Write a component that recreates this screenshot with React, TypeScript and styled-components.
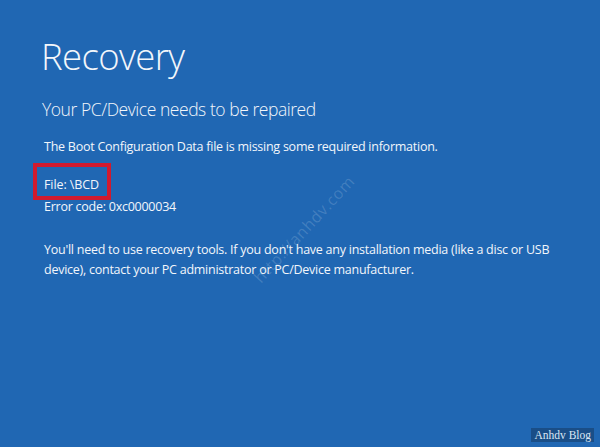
import styled, { createGlobalStyle } from "styled-components";

const GlobalStyle = createGlobalStyle`
  html, body {
    margin: 0;
    padding: 0;
    background: #2067b3;
  }
  #root {
    height: 447px;
  }
`;

const Screen = styled.main`
  position: relative;
  box-sizing: border-box;
  width: 600px;
  height: 447px;
  overflow: hidden;
  padding: 30px 0 0 41px;
  background: #2067b3;
  color: #f2f6fb;
  font-family: "Open Sans", "Noto Sans", sans-serif;
`;

const Title = styled.h1`
  margin: 0;
  font-size: 36.5px;
  font-weight: 300;
  line-height: 52px;
  letter-spacing: -0.6px;
`;

const Subtitle = styled.h2`
  margin: 14px 0 0 1px;
  font-size: 17.5px;
  font-weight: 300;
  line-height: 26px;
  letter-spacing: -0.45px;
`;

const Text = styled.p<{ $gap?: number }>`
  margin: ${(p) => p.$gap ?? 0}px 0 0 3px;
  font-size: 12.5px;
  font-weight: 400;
  line-height: 20px;
  letter-spacing: -0.25px;
`;

const Details = styled.div`
  margin-top: 6px;
  display: flex;
  flex-direction: column;
  align-items: flex-start;
`;

const Highlight = styled.span`
  display: inline-block;
  margin-left: -8px;
  padding: 9px 8px 2px 4px;
  border: 4px solid #d11a2e;
  font-size: 12.5px;
  line-height: 18px;
  letter-spacing: -0.1px;

  & > span {
    margin-left: 3px;
  }
`;

const Paragraph = styled(Text)`
  max-width: 520px;
`;

const Watermark = styled.span`
  position: absolute;
  left: 214px;
  top: 218px;
  width: 180px;
  text-align: center;
  transform: rotate(-47deg);
  font-family: "Open Sans", "Noto Sans", sans-serif;
  font-size: 16px;
  color: rgba(255, 255, 255, 0.16);
  letter-spacing: 0.6px;
`;

const Badge = styled.span`
  position: absolute;
  right: 6px;
  bottom: 5px;
  padding: 0 3px;
  background: #1a4e87;
  color: #dbe7f4;
  font-family: "Liberation Serif", "DejaVu Serif", serif;
  font-size: 11.5px;
  line-height: 14px;
`;

export default function App() {
  return (
    <>
      <GlobalStyle />
      <Screen>
        <Title>Recovery</Title>
        <Subtitle>Your PC/Device needs to be repaired</Subtitle>
        <Text $gap={15}>
          The Boot Configuration Data file is missing some required information.
        </Text>
        <Details>
          <Highlight>
            <span>File: \BCD</span>
          </Highlight>
          <Text $gap={-3}>Error code: 0xc0000034</Text>
        </Details>
        <Paragraph $gap={23}>
          You'll need to use recovery tools. If you don't have any installation
          media (like a disc or USB device), contact your PC administrator or
          PC/Device manufacturer.
        </Paragraph>
        <Watermark>http://anhdv.com</Watermark>
        <Badge>Anhdv Blog</Badge>
      </Screen>
    </>
  );
}
